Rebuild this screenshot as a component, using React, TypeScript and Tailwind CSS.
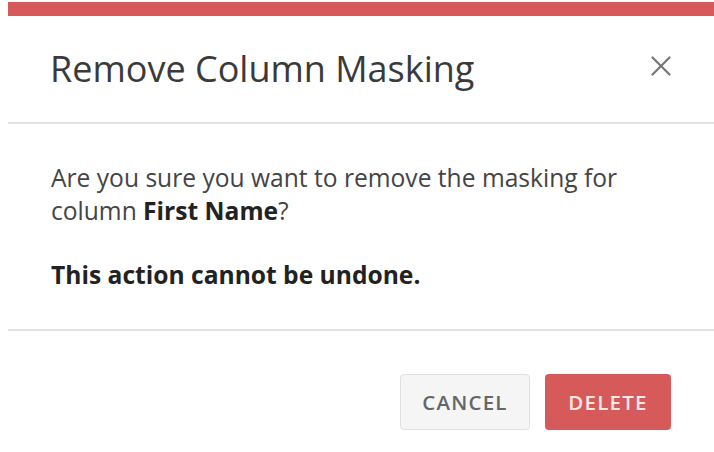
import { X } from "lucide-react";

export default function App() {
  return (
    <div className="h-[452px] w-[714px] overflow-hidden bg-white pt-[2px] pl-[8px] font-['Open_Sans',sans-serif]">
      <div className="border-t-[14px] border-[#d65a5a] bg-white">
        <div className="flex h-[106px] items-center justify-between pl-[42px] pr-[36px]">
          <h2 className="text-[36px] font-normal text-[#3a3a3a]">Remove Column Masking</h2>
          <button className="mb-[6px] text-[#777]">
            <X className="h-[34px] w-[34px]" strokeWidth={1.6} />
          </button>
        </div>
        <div className="border-t-2 border-[#e2e2e2] px-[43px] pt-[37px] pb-[38px] text-[24.6px] leading-[33px] text-[#444]">
          <p>
            Are you sure you want to remove the masking for
            <br />
            column <b className="font-bold text-[#222]">First Name</b>?
          </p>
          <p className="mt-[31px] font-bold text-[#222]">This action cannot be undone.</p>
        </div>
        <div className="flex justify-end gap-[15px] border-t-2 border-[#e2e2e2] pt-[43px] pr-[43px]">
          <button className="h-[56px] w-[130px] rounded-[4px] border border-[#e0e0e0] bg-[#f5f5f5] text-[20.5px] font-semibold tracking-[1.2px] text-[#666]">
            CANCEL
          </button>
          <button className="h-[56px] w-[126px] rounded-[4px] bg-[#d65a5a] text-[20.5px] font-semibold tracking-[1.2px] text-[#fde8e8]">
            DELETE
          </button>
        </div>
      </div>
    </div>
  );
}
